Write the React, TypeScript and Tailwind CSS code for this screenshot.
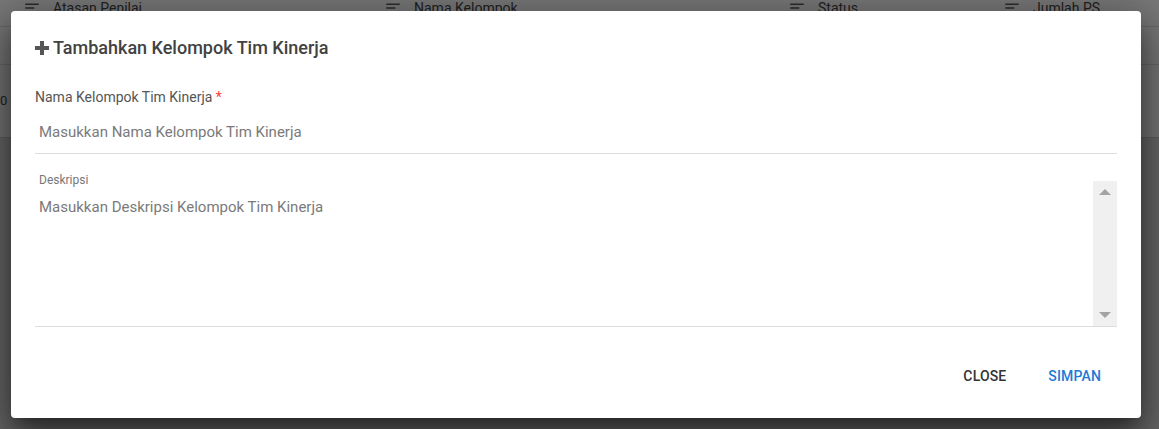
import React from "react";

const SortIcon: React.FC = () => (
  <svg width="18" height="18" viewBox="0 0 24 24" className="fill-[#3c3c3c]">
    <path d="M3 18h6v-2H3v2zM3 6v2h18V6H3zm0 7h12v-2H3v2z" />
  </svg>
);

const columns = [
  { label: "Atasan Penilai", w: "w-[361px]" },
  { label: "Nama Kelompok", w: "w-[404px]" },
  { label: "Status", w: "w-[215px]" },
  { label: "Jumlah PS", w: "flex-1" },
];

const App: React.FC = () => {
  return (
    <div className="relative w-[1159px] h-[429px] overflow-hidden bg-[#d8d8d8] font-['Roboto',sans-serif]">
      {/* page behind the dialog */}
      <div className="bg-white">
        <div className="flex pl-[23px] border-b border-[#dcdcdc] -mt-[10px] h-[37px] items-center">
          {columns.map((c) => (
            <div key={c.label} className={`${c.w} flex items-center gap-[12px] text-[14px] text-[#222]`}>
              <SortIcon />
              <span>{c.label}</span>
            </div>
          ))}
        </div>
        <div className="h-[38px] border-b border-[#dcdcdc]" />
        <div className="h-[73px] border-b border-[#c8c8c8] flex items-center text-[13px] text-[#222]">
          0 (
        </div>
      </div>

      {/* overlay */}
      <div className="absolute inset-0 bg-[rgba(33,33,33,0.6)]" />

      {/* dialog */}
      <div className="absolute left-[11px] top-[11px] w-[1130px] h-[407px] bg-white rounded-[4px] shadow-[0_11px_15px_-7px_rgba(0,0,0,0.35),0_24px_38px_3px_rgba(0,0,0,0.3),0_9px_46px_8px_rgba(0,0,0,0.3)] flex flex-col">
        <div className="flex items-center gap-[4px] px-[24px] pt-[25px] pb-[10px]">
          <svg width="14" height="14" viewBox="0 0 14 14" className="fill-[#555]">
            <path d="M5 0h4v5h5v4H9v5H5V9H0V5h5z" />
          </svg>
          <h2 className="text-[18px] font-medium text-[#424242] leading-[24px]">Tambahkan Kelompok Tim Kinerja</h2>
        </div>

        <div className="px-[24px] pt-[17px]">
          <label className="block text-[14px] text-[#555] leading-[20px]">
            Nama Kelompok Tim Kinerja <span className="text-[#ff3b3b]">*</span>
          </label>
          <div className="border-b border-[#dcdcdc] h-[47px] flex items-center pl-[4px] pt-[4px]">
            <span className="text-[15px] text-[#7a7a7a]">Masukkan Nama Kelompok Tim Kinerja</span>
          </div>

          <div className="mt-[18px] h-[155px] border-b border-[#dcdcdc] flex">
            <div className="flex-1 pl-[4px]">
              <div className="text-[12px] text-[#777] leading-[16px]">Deskripsi</div>
              <div className="text-[15px] text-[#7a7a7a] mt-[8px] leading-[22px]">Masukkan Deskripsi Kelompok Tim Kinerja</div>
            </div>
            <div className="w-[24px] mt-[9px] bg-[#f0f0f0] flex flex-col justify-between items-center py-[8px]">
              <div className="w-0 h-0 border-l-[6px] border-r-[6px] border-b-[6px] border-l-transparent border-r-transparent border-b-[#a3a3a3]" />
              <div className="w-0 h-0 border-l-[6px] border-r-[6px] border-t-[6px] border-l-transparent border-r-transparent border-t-[#a3a3a3]" />
            </div>
          </div>
        </div>

        <div className="flex justify-end gap-[10px] px-[24px] mt-auto pb-[24px]">
          <button className="h-[36px] px-[16px] text-[14px] font-medium uppercase text-[#333] tracking-[0.01em]">Close</button>
          <button className="h-[36px] px-[16px] text-[14px] font-medium uppercase text-[#1e7ad6] tracking-[0.01em]">Simpan</button>
        </div>
      </div>
    </div>
  );
};

export default App;
